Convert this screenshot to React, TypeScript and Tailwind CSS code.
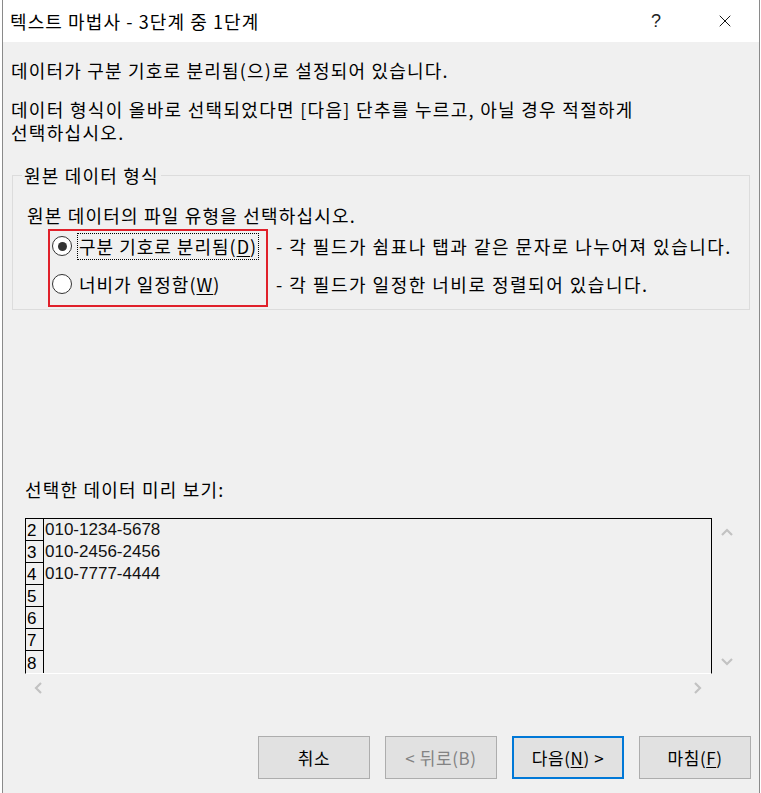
import { X } from "lucide-react";

const ko = { fontFamily: '"Noto Sans CJK KR", "Noto Sans", sans-serif' };

function Chevron({ dir }: { dir: "up" | "down" | "left" | "right" }) {
  const d = {
    up: "M1 8 L6 3 L11 8",
    down: "M1 3 L6 8 L11 3",
    left: "M8 1 L3 6 L8 11",
    right: "M3 1 L8 6 L3 11",
  }[dir];
  return (
    <svg width="12" height="12" viewBox="0 0 12 12">
      <path d={d} fill="none" stroke="#c2c2c2" strokeWidth="2.2" />
    </svg>
  );
}

function Radio({ checked }: { checked?: boolean }) {
  return (
    <div className="w-[20px] h-[20px] rounded-full border border-[#333] bg-white flex items-center justify-center shrink-0">
      {checked && <div className="w-[9px] h-[9px] rounded-full bg-[#333]" />}
    </div>
  );
}

function Btn({ label, disabled, focus }: { label: React.ReactNode; disabled?: boolean; focus?: boolean }) {
  return (
    <button
      className={
        "w-[112px] h-[43px] bg-[#e1e1e1] flex items-center justify-center text-[17px] tracking-[0.6px] " +
        (focus ? "border-2 border-[#0078d7] " : "border border-[#adadad] ") +
        (disabled ? "text-[#838383]" : "text-black")
      }
      style={ko}
    >
      {label}
    </button>
  );
}

export default function App() {
  const rows = ["010-1234-5678", "010-2456-2456", "010-7777-4444", "", "", "", ""];

  return (
    <div className="w-[761px] h-[793px] bg-white" style={ko}>
      <div className="ml-[2px] w-[758px] h-full border-x border-[#8a8a8a] flex flex-col">
        {/* title bar */}
        <div className="h-[42px] bg-white flex items-center shrink-0">
          <div className="pl-[7px] text-[18px] tracking-[1.1px] text-black leading-[22px]">텍스트 마법사 - 3단계 중 1단계</div>
          <div className="ml-auto flex items-center">
            <span className="text-[18px] text-[#222] mr-[54px]" style={{ fontFamily: '"Liberation Sans", sans-serif' }}>?</span>
            <X size={20} strokeWidth={1.1} className="mr-[24px] text-black" />
          </div>
        </div>

        {/* body */}
        <div className="flex-1 bg-[#f0f0f0] flex flex-col text-black text-[18px] tracking-[1.2px]">
          <p className="pl-[8px] pt-[16px] leading-[24px]">데이터가 구분 기호로 분리됨(으)로 설정되어 있습니다.</p>
          <div className="pl-[8px] pt-[16px] tracking-[1.3px]">
            <div className="h-[23px] leading-[23px]">데이터 형식이 올바로 선택되었다면 [다음] 단추를 누르고, 아닐 경우 적절하게</div>
            <div className="h-[23px] leading-[23px]">선택하십시오.</div>
          </div>

          <fieldset className="ml-[9px] mt-[20px] w-[738px] h-[146px] border border-[#dcdcdc] pl-[14px]">
            <legend className="ml-[-5px] px-[2px] leading-[22px]">원본 데이터 형식</legend>
            <div className="leading-[22px] mt-[18px]">원본 데이터의 파일 유형을 선택하십시오.</div>
            <div className="flex items-start mt-[3px]">
              <div className="ml-[21px] w-[220px] h-[78px] border-2 border-[#e0202a] flex flex-col pl-[2px] pt-[1px]">
                <div className="flex items-center h-[28px]">
                  <Radio checked />
                  <div className="ml-[5px] border border-dotted border-black h-[27px] px-[1px] flex items-center leading-[22px] tracking-[1px]">
                    구분 기호로 분리됨(<span className="underline underline-offset-2">D</span>)
                  </div>
                </div>
                <div className="flex items-center h-[28px] mt-[10px]">
                  <Radio />
                  <div className="ml-[7px] leading-[22px] tracking-[1px]">
                    너비가 일정함(<span className="underline underline-offset-2">W</span>)
                  </div>
                </div>
              </div>
              <div className="ml-[8px] pt-[3px] flex flex-col tracking-[1.5px]">
                <div className="h-[28px] flex items-center">- 각 필드가 쉼표나 탭과 같은 문자로 나누어져 있습니다.</div>
                <div className="h-[28px] flex items-center mt-[10px]">- 각 필드가 일정한 너비로 정렬되어 있습니다.</div>
              </div>
            </div>
          </fieldset>

          <div className="pl-[22px] mt-[167px] leading-[24px]">선택한 데이터 미리 보기:</div>

          {/* preview */}
          <div className="ml-[22px] mt-[17px] grid grid-cols-[687px_26px] grid-rows-[156px_26px] tracking-normal">
            <div className="border-t border-l border-r border-black border-b border-b-white flex flex-col" style={{ fontFamily: '"Liberation Sans", sans-serif' }}>
              {rows.map((r, i) => (
                <div key={i} className="flex h-[22px]">
                  <div className={"w-[18px] border-r border-black pl-[1px] flex items-end text-[17px] leading-[19px] " + (i < 6 ? "border-b" : "")}>
                    {i + 2}
                  </div>
                  <div className="pl-[1px] text-[17px] leading-[22px] text-[#111]">{r}</div>
                </div>
              ))}
            </div>
            <div className="flex flex-col items-center justify-between pt-[9px] pb-[6px] pl-[3px]">
              <Chevron dir="up" />
              <Chevron dir="down" />
            </div>
            <div className="flex items-center justify-between px-[8px] pt-[1px]">
              <Chevron dir="left" />
              <Chevron dir="right" />
            </div>
            <div />
          </div>

          {/* buttons */}
          <div className="mt-auto mb-[14px] flex justify-end gap-[15px] pr-[8px] tracking-normal">
            <Btn label="취소" />
            <Btn label="< 뒤로(B)" disabled />
            <Btn
              label={
                <span>
                  다음(<span className="underline underline-offset-2">N</span>) &gt;
                </span>
              }
              focus
            />
            <Btn
              label={
                <span>
                  마침(<span className="underline underline-offset-2">F</span>)
                </span>
              }
            />
          </div>
        </div>
      </div>
    </div>
  );
}
